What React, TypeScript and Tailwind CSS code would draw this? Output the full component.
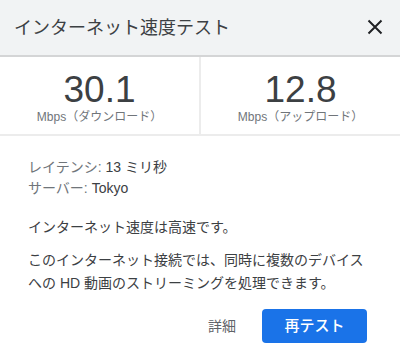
import React from "react";

const font = { fontFamily: '"Liberation Sans", "Noto Sans CJK JP", sans-serif' };

type StatProps = {
  value: string;
  label: string;
};

const Stat: React.FC<StatProps> = ({ value, label }) => (
  <div className="flex flex-1 flex-col items-center pt-[13px]">
    <div className="text-[37px] leading-[40px] text-[#3c4043]">{value}</div>
    <div className="mt-[-1px] text-[12px] leading-[16px] text-[#70757a]">{label}</div>
  </div>
);

export default function App() {
  return (
    <div className="h-[355px] w-[400px] bg-white" style={font}>
      <div className="flex h-[57px] items-center justify-between border-b-2 border-[#d4d5d6] bg-[#f1f3f4] pl-[14px] pr-[17px]">
        <div className="text-[18px] leading-[24px] text-[#3c4043]">インターネット速度テスト</div>
        <svg width="16" height="16" viewBox="0 0 16 16" className="mt-[-2px]">
          <path d="M1.5 1.5L14.5 14.5M14.5 1.5L1.5 14.5" stroke="#202124" strokeWidth="2" />
        </svg>
      </div>
      <div className="flex h-[79px] border-b-2 border-[#ececec]">
        <Stat value="30.1" label="Mbps（ダウンロード）" />
        <div className="w-[2px] bg-[#ececec]" />
        <Stat value="12.8" label="Mbps（アップロード）" />
      </div>
      <div className="px-[28px] pt-[21px] text-[14px] text-[#3c4043]">
        <div className="leading-[21px]">
          <span className="text-[#70757a]">レイテンシ: </span>13 ミリ秒
        </div>
        <div className="leading-[21px]">
          <span className="text-[#70757a]">サーバー: </span>Tokyo
        </div>
        <p className="mt-[17px] leading-[23px]">インターネット速度は高速です。</p>
        <p className="mt-[10px] leading-[23px]">
          このインターネット接続では、同時に複数のデバイスへの HD 動画のストリーミングを処理できます。
        </p>
      </div>
      <div className="mt-[14px] flex items-center justify-end gap-[26px] pr-[33px]">
        <span className="text-[14px] text-[#5f6368]">詳細</span>
        <button className="h-[34px] w-[105px] rounded-[4px] bg-[#1a73e8] text-[15px] font-medium text-white">
          再テスト
        </button>
      </div>
    </div>
  );
}
